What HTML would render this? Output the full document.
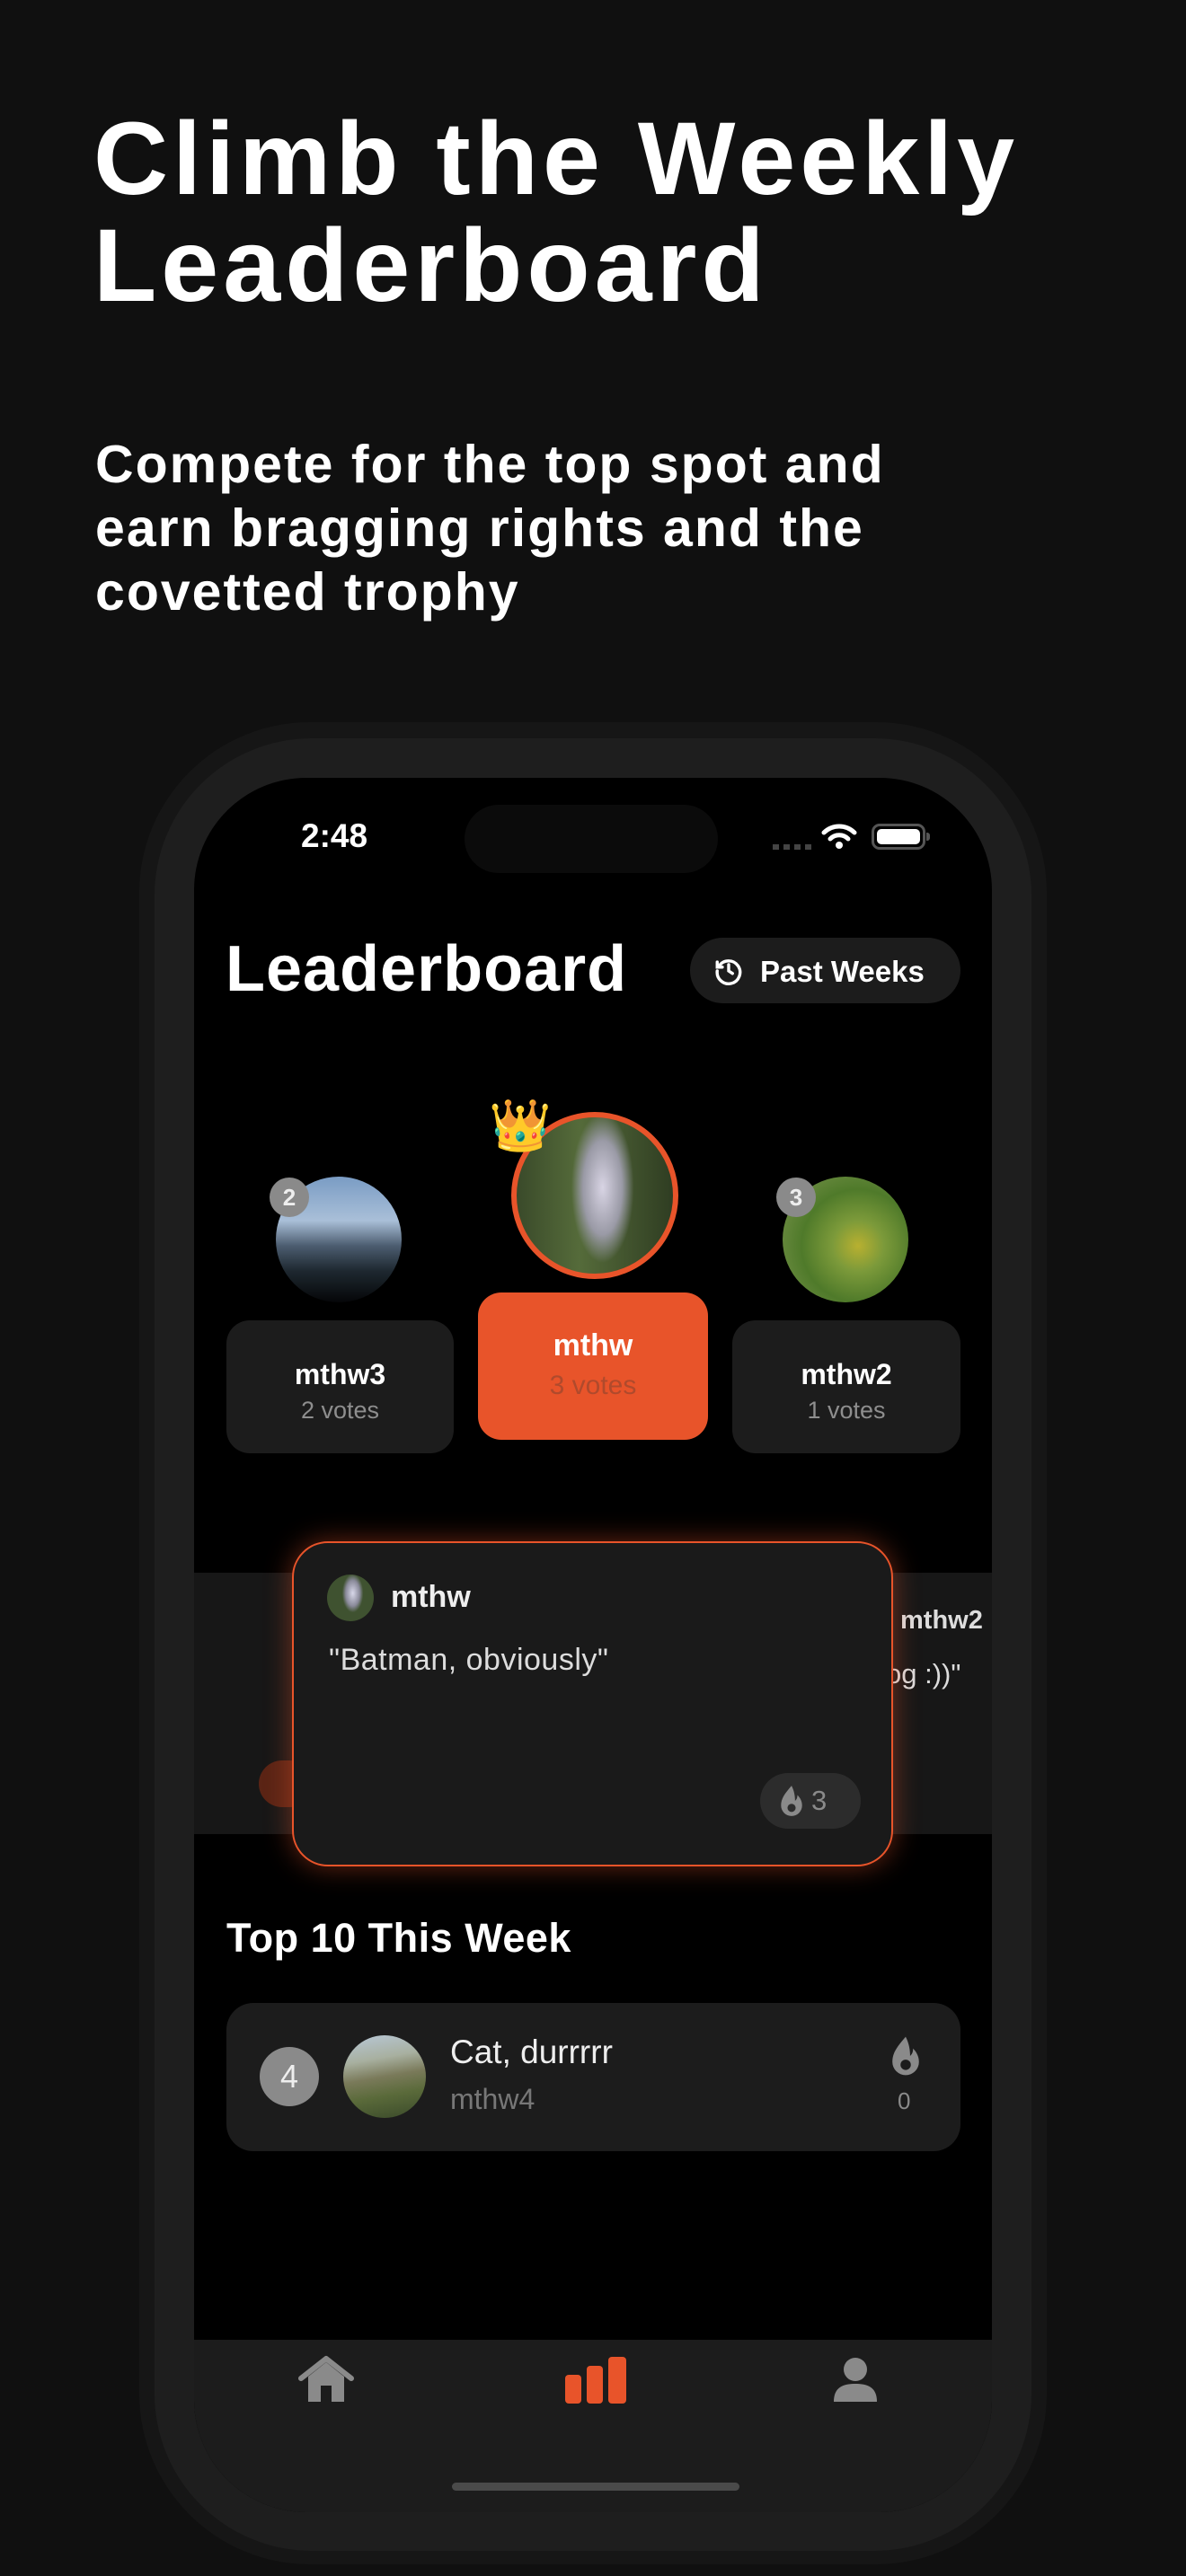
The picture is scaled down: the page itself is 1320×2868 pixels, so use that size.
<!DOCTYPE html>
<html><head><meta charset="utf-8">
<style>
*{margin:0;padding:0;box-sizing:border-box}
body{width:1320px;height:2868px;background:#101010;position:relative;overflow:hidden;font-family:"Liberation Sans",sans-serif;color:#fff}
.a{position:absolute}
h1{position:absolute;left:104px;top:118px;font-size:115px;line-height:119px;font-weight:bold;letter-spacing:5px}
.sub{position:absolute;left:106px;top:482px;font-size:59px;line-height:71px;font-weight:bold;letter-spacing:2px}
.outer{left:155px;top:804px;width:1010px;height:2051px;border-radius:190px;background:#161616}
.frame{left:172px;top:822px;width:976px;height:2018px;border-radius:175px;background:#1e1e1e}
.screen{left:216px;top:866px;width:888px;height:1931px;border-radius:125px;background:#000;overflow:hidden}
.card{background:#1c1c1c;border-radius:26px;text-align:center}
.nm{font-weight:bold;font-size:32px}
.vt{font-size:27px;color:#8e8e8e;margin-top:6px}
.badge{width:44px;height:44px;border-radius:50%;background:#8a8a8a;color:#eee;font-size:26px;text-align:center;line-height:44px;font-weight:bold}
</style></head><body>
<h1>Climb the Weekly<br>Leaderboard</h1>
<div class="sub">Compete for the top spot and<br>earn bragging rights and the<br>covetted trophy</div>

<div class="a outer"></div>
<div class="a frame"></div>
<div class="a screen">
  <div class="a" style="left:119px;top:44px;font-size:37px;font-weight:bold">2:48</div>
  <div class="a" style="left:301px;top:30px;width:282px;height:76px;border-radius:38px;background:#0b0b0b"></div>
  <div class="a" style="left:644px;top:74px;width:44px;height:6px;background:repeating-linear-gradient(90deg,#444 0 7px,transparent 7px 12px)"></div>
  <svg class="a" style="left:698px;top:50px" width="40" height="30" viewBox="0 0 40 30"><path d="M3 11 A24 24 0 0 1 37 11" stroke="#fff" stroke-width="5" fill="none" stroke-linecap="round"/><path d="M10 18 A14 14 0 0 1 30 18" stroke="#fff" stroke-width="5" fill="none" stroke-linecap="round"/><circle cx="20" cy="25" r="4" fill="#fff"/></svg>
  <div class="a" style="left:754px;top:51px;width:60px;height:29px;border-radius:9px;border:3px solid #555;padding:3px"><div style="width:100%;height:100%;background:#fff;border-radius:5px"></div></div>
  <div class="a" style="left:815px;top:61px;width:4px;height:9px;background:#555;border-radius:0 3px 3px 0"></div>

  <div class="a" style="left:35px;top:172px;font-size:72px;font-weight:bold;letter-spacing:1px">Leaderboard</div>
  <div class="a" style="left:552px;top:178px;width:301px;height:73px;border-radius:37px;background:#1c1c1c"></div>
  <svg class="a" style="left:578px;top:198px" width="34" height="34" viewBox="0 0 24 24" fill="none" stroke="#fff" stroke-width="2.4" stroke-linecap="round"><path d="M4.5 8 A9 9 0 1 1 3 12"/><path d="M3 5v4h4"/><path d="M12 7v5l3 2"/></svg>
  <div class="a" style="left:630px;top:197px;font-size:33px;font-weight:bold">Past Weeks</div>

  <div class="a" style="left:91px;top:444px;width:140px;height:140px;border-radius:50%;background:linear-gradient(180deg,#7a9cc4 0%,#a9bfd8 35%,#4c5d70 55%,#1e2830 75%,#050608 100%)"></div>
  <div class="a badge" style="left:84px;top:445px">2</div>
  <div class="a" style="left:353px;top:372px;width:186px;height:186px;border-radius:50%;border:6px solid #e8542a;background:radial-gradient(ellipse 25% 60% at 55% 45%,#d8d4e4,#9a9aa6 50%,transparent 80%),linear-gradient(90deg,#3a4a2a,#556b3a 40%,#2f3d22)"></div>
  <div class="a" style="left:328px;top:357px;font-size:56px;line-height:60px;font-family:'Noto Color Emoji','DejaVu Sans',sans-serif">👑</div>
  <div class="a" style="left:655px;top:444px;width:140px;height:140px;border-radius:50%;background:radial-gradient(circle at 60% 55%,#b8b030 0,#7c9a3a 25%,#4f7a2a 55%,#6a8a40 80%,#c8cdbc 100%)"></div>
  <div class="a badge" style="left:648px;top:445px">3</div>

  <div class="a card" style="left:36px;top:604px;width:253px;height:148px;padding-top:42px"><div class="nm">mthw3</div><div class="vt">2 votes</div></div>
  <div class="a card" style="left:316px;top:573px;width:256px;height:164px;background:#e8542a;padding-top:40px"><div class="nm" style="font-size:34px">mthw</div><div class="vt" style="color:#b04a2c;font-size:30px;margin-top:8px">3 votes</div></div>
  <div class="a card" style="left:599px;top:604px;width:254px;height:148px;padding-top:42px"><div class="nm">mthw2</div><div class="vt">1 votes</div></div>

  <div class="a" style="left:0;top:885px;width:888px;height:291px;background:#171717"></div>
  <div class="a" style="left:786px;top:922px;font-size:29px;font-weight:bold;color:#ddd">mthw2</div>
  <div class="a" style="left:770px;top:980px;font-size:31px;color:#ddd">og :))"</div>
  <div class="a" style="left:72px;top:1094px;width:60px;height:52px;border-radius:26px;background:#5a2415"></div>

  <div class="a" style="left:109px;top:850px;width:669px;height:362px;border-radius:40px;border:2.5px solid #e8542a;background:#1a1a1a;box-shadow:0 0 30px rgba(232,84,42,0.45)"></div>
  <div class="a" style="left:148px;top:887px;width:52px;height:52px;border-radius:50%;background:radial-gradient(ellipse 30% 55% at 55% 40%,#d8d8ea,#8a8a9a 50%,transparent 75%),#3f5230"></div>
  <div class="a" style="left:219px;top:893px;font-size:34px;font-weight:bold;color:#eee">mthw</div>
  <div class="a" style="left:150px;top:963px;font-size:34px;color:#ddd;letter-spacing:0.5px">"Batman, obviously"</div>
  <div class="a" style="left:630px;top:1108px;width:112px;height:62px;border-radius:31px;background:#2c2c2c"></div>
  <svg class="a" style="left:652px;top:1120px" width="26" height="38" viewBox="0 0 20 28"><path d="M10 1 C4 8 1 12 1 18 a9 9 0 0 0 18 0 c0-4-2-7-4-9 c0 3-1 4-2 5 C13 9 12 5 10 1z" fill="#8a8a8a"/><circle cx="10" cy="20" r="3.5" fill="#2c2c2c"/></svg>
  <div class="a" style="left:687px;top:1121px;font-size:31px;color:#8a8a8a">3</div>

  <div class="a" style="left:36px;top:1266px;font-size:45px;font-weight:bold;letter-spacing:0.5px">Top 10 This Week</div>
  <div class="a" style="left:36px;top:1364px;width:817px;height:165px;border-radius:30px;background:#1c1c1c"></div>
  <div class="a" style="left:73px;top:1413px;width:66px;height:66px;border-radius:50%;background:#8a8a8a;text-align:center;line-height:66px;font-size:36px;color:#eee">4</div>
  <div class="a" style="left:166px;top:1400px;width:92px;height:92px;border-radius:50%;background:linear-gradient(170deg,#b8c8d8 0,#a8b0a0 30%,#7a7a5a 50%,#5a6a3a 70%,#3a4a2a 100%)"></div>
  <div class="a" style="left:285px;top:1398px;font-size:37px;color:#eee">Cat, durrrrr</div>
  <div class="a" style="left:285px;top:1453px;font-size:32px;color:#777">mthw4</div>
  <svg class="a" style="left:775px;top:1400px" width="34" height="46" viewBox="0 0 20 28"><path d="M10 1 C4 8 1 12 1 18 a9 9 0 0 0 18 0 c0-4-2-7-4-9 c0 3-1 4-2 5 C13 9 12 5 10 1z" fill="#8a8a8a"/><circle cx="10" cy="20" r="3.5" fill="#1c1c1c"/></svg>
  <div class="a" style="left:783px;top:1458px;font-size:26px;color:#8a8a8a">0</div>

  <div class="a" style="left:0;top:1739px;width:888px;height:192px;background:#1c1c1c"></div>
  <svg class="a" style="left:115px;top:1754px" width="64" height="56" viewBox="0 0 32 28"><path d="M2 14 L16 3 L30 14" stroke="#8a8a8a" stroke-width="3" fill="none" stroke-linecap="round" stroke-linejoin="round"/><path d="M6 13 V27 H26 V13 L16 5z" fill="#8a8a8a"/><rect x="13" y="18" width="6" height="9" fill="#1c1c1c"/></svg>
  <svg class="a" style="left:413px;top:1758px" width="68" height="52" viewBox="0 0 34 26"><rect x="0" y="10" width="9" height="16" rx="2" fill="#e8542a"/><rect x="12" y="5" width="9" height="21" rx="2" fill="#e8542a"/><rect x="24" y="0" width="10" height="26" rx="2" fill="#e8542a"/></svg>
  <svg class="a" style="left:712px;top:1758px" width="48" height="50" viewBox="0 0 24 25"><circle cx="12" cy="7" r="6.5" fill="#8a8a8a"/><path d="M0 25 C0 17 5 15 12 15 C19 15 24 17 24 25z" fill="#8a8a8a"/></svg>
  <div class="a" style="left:287px;top:1898px;width:320px;height:9px;border-radius:5px;background:#4a4a4a"></div>
</div>
</body></html>
